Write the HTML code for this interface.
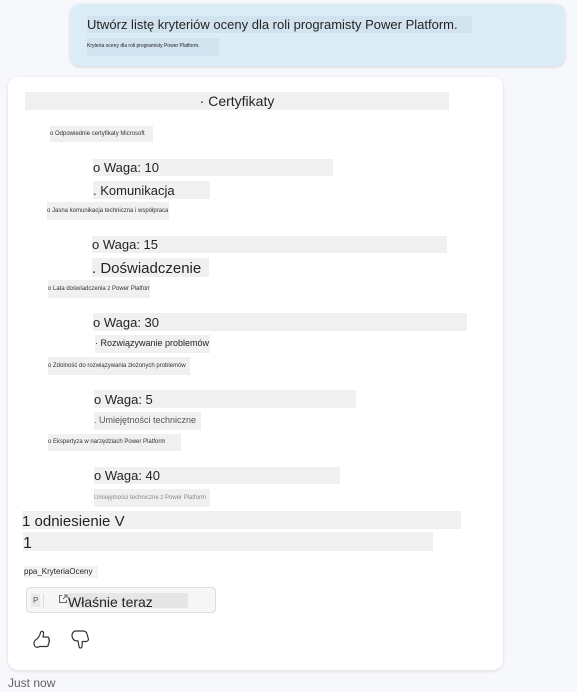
<!DOCTYPE html><html><head><meta charset="utf-8"><style>
*{margin:0;padding:0;box-sizing:border-box}
body{width:577px;height:692px;background:#f7f8fb;font-family:"Liberation Sans",sans-serif;position:relative;overflow:hidden;color:#242424}
.a{position:absolute;white-space:nowrap;overflow:hidden;background:#f0f0f0;line-height:1}
.bub{position:absolute;left:70px;top:4px;width:495px;height:62px;background:#ddedf8;border-radius:10px;box-shadow:0 1px 3px rgba(0,0,0,.15)}
.card{position:absolute;left:8px;top:77px;width:495px;height:593px;background:#fff;border-radius:10px;box-shadow:0 1px 3px rgba(0,0,0,.12)}
.t{font-size:6px;color:#333;background:#f0f0f0}
.w{font-size:13px;padding-top:2px}
</style></head><body>
<div class="bub"></div>
<div class="a" style="left:87px;top:16px;width:385px;height:17px;background:#d1e3ef;font-size:13px;padding-top:2px">Utwórz listę kryteriów oceny dla roli programisty Power Platform.</div>
<div class="a" style="left:87px;top:38px;width:132px;height:18px;background:#d1e3ef;font-size:5px;padding-top:6px">Kryteria oceny dla roli programisty Power Platform.</div>
<div class="card"></div>
<div class="a" style="left:25px;top:92px;width:424px;height:18px;font-size:14px;text-align:center;padding-top:2px">· Certyfikaty</div>
<div class="a t" style="left:50px;top:126px;width:103px;height:16px;padding-top:5px">o Odpowiednie certyfikaty Microsoft</div>
<div class="a w" style="left:93px;top:159px;width:240px;height:17px">o Waga: 10</div>
<div class="a w" style="left:93px;top:181px;width:117px;height:18px;padding-top:3px">. Komunikacja</div>
<div class="a t" style="left:47px;top:202px;width:122px;height:18px;padding-top:6px">o Jasna komunikacja techniczna i współpraca</div>
<div class="a w" style="left:92px;top:236px;width:355px;height:17px">o Waga: 15</div>
<div class="a" style="left:92px;top:258px;width:117px;height:19px;font-size:15px;padding-top:3px">. Doświadczenie</div>
<div class="a t" style="left:48px;top:280px;width:102px;height:18px;padding-top:6px">o Lata doświadczenia z Power Platform</div>
<div class="a w" style="left:93px;top:313px;width:374px;height:18px;padding-top:3px">o Waga: 30</div>
<div class="a" style="left:95px;top:335px;width:115px;height:18px;font-size:9px;padding-top:4px;background:#f0f0f0">· Rozwiązywanie problemów</div>
<div class="a t" style="left:48px;top:357px;width:142px;height:18px;padding-top:6px">o Zdolność do rozwiązywania złożonych problemów</div>
<div class="a w" style="left:94px;top:390px;width:262px;height:18px;padding-top:3px">o Waga: 5</div>
<div class="a" style="left:94px;top:412px;width:107px;height:18px;font-size:9px;padding-top:4px;color:#555">. Umiejętności techniczne</div>
<div class="a t" style="left:48px;top:434px;width:133px;height:17px;padding-top:5px">o Ekspertyza w narzędziach Power Platform</div>
<div class="a w" style="left:94px;top:467px;width:246px;height:17px">o Waga: 40</div>
<div class="a t" style="left:94px;top:489px;width:116px;height:18px;padding-top:6px;color:#888">Umiejętności techniczne z Power Platform</div>
<div class="a" style="left:22px;top:511px;width:439px;height:18px;font-size:15px;padding-top:3px">1 odniesienie V</div>
<div class="a" style="left:23px;top:532px;width:410px;height:19px;font-size:16px;padding-top:4px">1</div>
<div class="a" style="left:24px;top:566px;width:74px;height:12px;font-size:8px;padding-top:2px;background:#f4f4f4">ppa_KryteriaOceny</div>
<div style="position:absolute;left:26px;top:587px;width:190px;height:26px;background:#f6f6f6;border:1px solid #ddd;border-radius:4px"></div>
<div class="a" style="left:31px;top:594px;width:9px;height:13px;font-size:8px;padding:3px 0 0 2px;background:#e8e8e8;color:#555">P</div>
<div style="position:absolute;left:43px;top:594px;width:1px;height:13px;background:#ddd"></div>
<svg style="position:absolute;left:58px;top:594px" width="10" height="10" viewBox="0 0 10 10" fill="none" stroke="#666" stroke-width="1"><path d="M4 1.5H1.5v7h7V6M6 1h3v3M9 1L5 5"/></svg>
<div class="a" style="left:68px;top:593px;width:120px;height:15px;font-size:14px;padding-top:2px;background:#e6e6e6">Właśnie teraz</div>
<svg style="position:absolute;left:32px;top:629px" width="20" height="22" viewBox="0 0 20 22" fill="none" stroke="#333" stroke-width="1.2" stroke-linejoin="round"><path d="M5 10C7 8 8 6 8.5 3.5 9 1.5 12 2 11.5 5L11 8h4.5c1.5 0 2 1.5 1.3 2.5 1 .8.8 2-.2 2.5.8.8.5 2-.5 2.3.5 1 0 2.2-1.2 2.2H8c-1 0-1.5.8-3 .8-2 0-3-2-3-4s1-3.3 3-4.3z"/></svg>
<svg style="position:absolute;left:70px;top:629px" width="20" height="22" viewBox="0 0 20 22" fill="none" stroke="#333" stroke-width="1.2" stroke-linejoin="round"><path d="M8 12l1 5.5c.3 2 2.8 2 3 0l.3-5h3.5c2 0 3-1.5 2.5-3L17 5c-.5-2-2-3-4-3H6C3.5 2 2 4 2 6.5S3.5 11 5 11.5z"/></svg>
<div style="position:absolute;left:8px;top:676px;font-size:12px;color:#616161">Just now</div>
</body></html>
